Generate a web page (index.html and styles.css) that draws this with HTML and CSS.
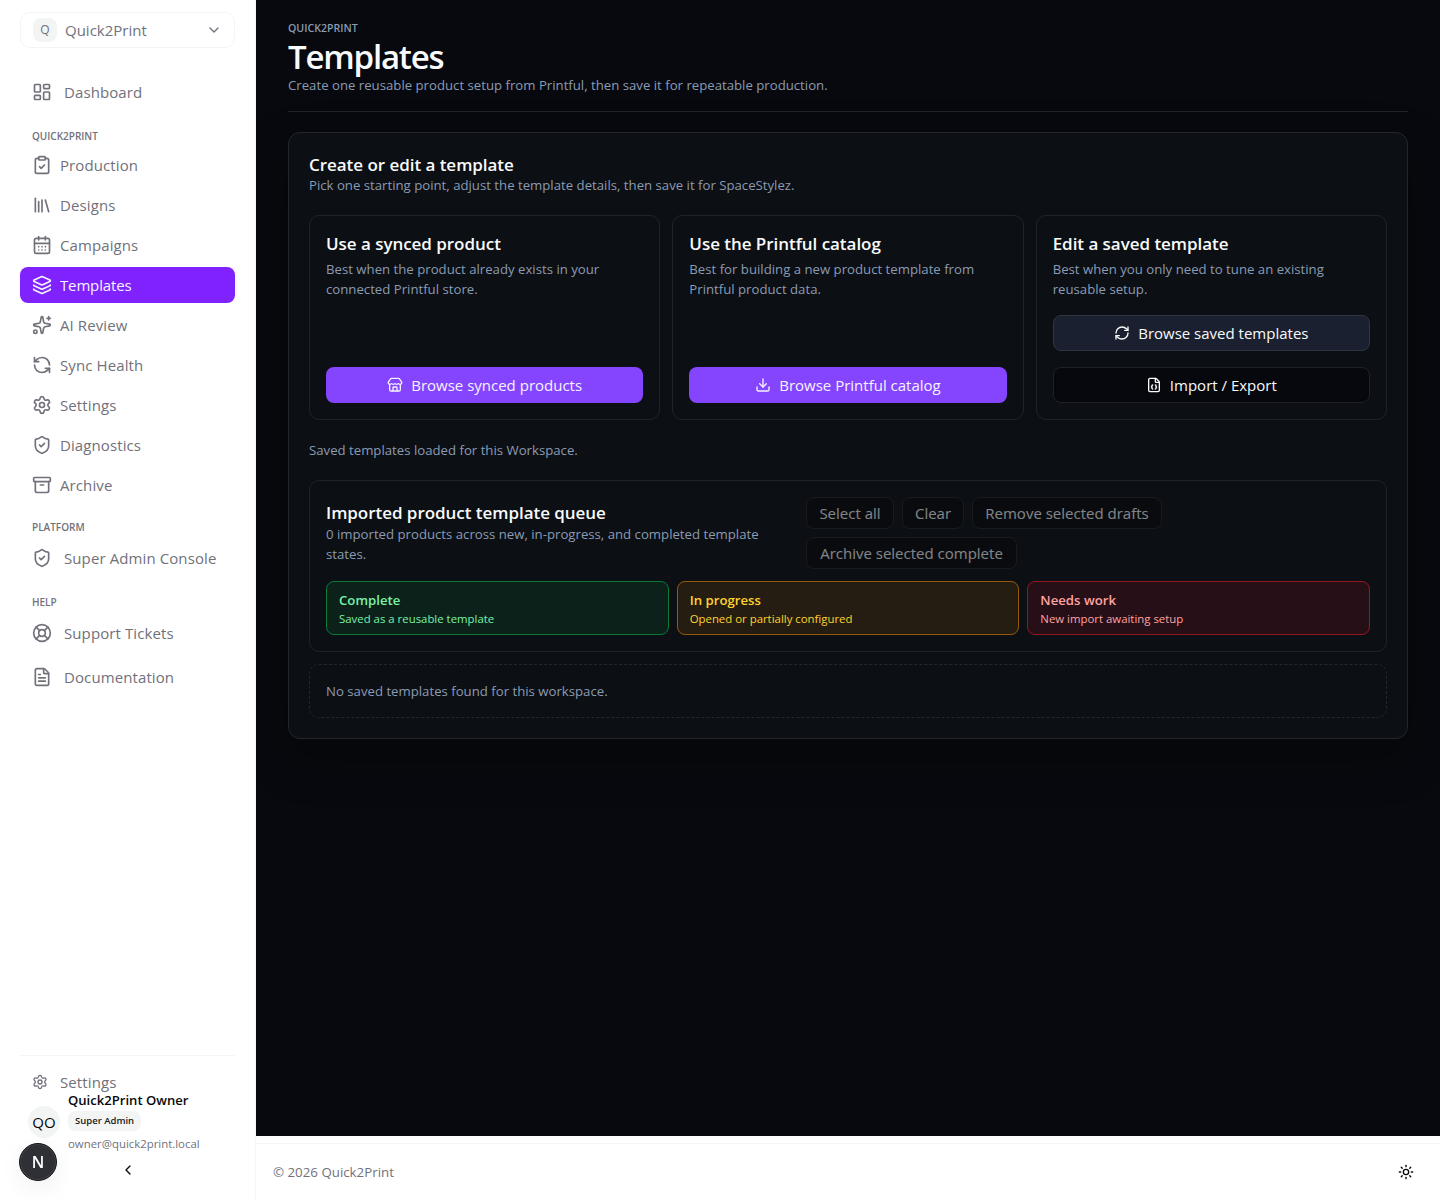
FILE: index.html
```html
<!DOCTYPE html>
<html lang="en">
<head>
    <meta charset="UTF-8">
    <meta name="viewport" content="width=device-width, initial-scale=1.0">
    <title>Templates - Quick2Print</title>
    <link rel="stylesheet" href="styles.css">
</head>
<body>
    <!-- Icon sprite -->
    <svg class="sprite" aria-hidden="true">
        <symbol id="i-dashboard" viewBox="0 0 24 24"><rect width="7" height="9" x="3" y="3" rx="1"/><rect width="7" height="5" x="14" y="3" rx="1"/><rect width="7" height="9" x="14" y="12" rx="1"/><rect width="7" height="5" x="3" y="16" rx="1"/></symbol>
        <symbol id="i-clipboard" viewBox="0 0 24 24"><rect width="8" height="4" x="8" y="2" rx="1"/><path d="M16 4h2a2 2 0 0 1 2 2v14a2 2 0 0 1-2 2H6a2 2 0 0 1-2-2V6a2 2 0 0 1 2-2h2"/><path d="m9 14 2 2 4-4"/></symbol>
        <symbol id="i-library" viewBox="0 0 24 24"><path d="m16 6 4 14"/><path d="M12 6v14"/><path d="M8 8v12"/><path d="M4 4v16"/></symbol>
        <symbol id="i-calendar" viewBox="0 0 24 24"><path d="M8 2v4"/><path d="M16 2v4"/><rect width="18" height="18" x="3" y="4" rx="2"/><path d="M3 10h18"/><path d="M8 14h.01"/><path d="M12 14h.01"/><path d="M16 14h.01"/><path d="M8 18h.01"/><path d="M12 18h.01"/><path d="M16 18h.01"/></symbol>
        <symbol id="i-layers" viewBox="0 0 24 24"><path d="M12.83 2.18a2 2 0 0 0-1.66 0L2.6 6.08a1 1 0 0 0 0 1.83l8.58 3.91a2 2 0 0 0 1.66 0l8.58-3.9a1 1 0 0 0 0-1.83z"/><path d="M2 12a1 1 0 0 0 .58.91l8.6 3.91a2 2 0 0 0 1.65 0l8.58-3.9A1 1 0 0 0 22 12"/><path d="M2 17a1 1 0 0 0 .58.91l8.6 3.91a2 2 0 0 0 1.65 0l8.58-3.9A1 1 0 0 0 22 17"/></symbol>
        <symbol id="i-sparkles" viewBox="0 0 24 24"><path d="M11.017 2.814a1 1 0 0 1 1.966 0l1.051 5.558a2 2 0 0 0 1.594 1.594l5.558 1.051a1 1 0 0 1 0 1.966l-5.558 1.051a2 2 0 0 0-1.594 1.594l-1.051 5.558a1 1 0 0 1-1.966 0l-1.051-5.558a2 2 0 0 0-1.594-1.594l-5.558-1.051a1 1 0 0 1 0-1.966l5.558-1.051a2 2 0 0 0 1.594-1.594z"/><path d="M20 2v4"/><path d="M22 4h-4"/><circle cx="4" cy="20" r="2"/></symbol>
        <symbol id="i-sync" viewBox="0 0 24 24"><path d="M21 12a9 9 0 0 0-9-9 9.75 9.75 0 0 0-6.74 2.74L3 8"/><path d="M3 3v5h5"/><path d="M3 12a9 9 0 0 0 9 9 9.75 9.75 0 0 0 6.74-2.74L21 16"/><path d="M16 16h5v5"/></symbol>
        <symbol id="i-refresh" viewBox="0 0 24 24"><path d="M3 12a9 9 0 0 1 9-9 9.75 9.75 0 0 1 6.74 2.74L21 8"/><path d="M21 3v5h-5"/><path d="M21 12a9 9 0 0 1-9 9 9.75 9.75 0 0 1-6.74-2.74L3 16"/><path d="M8 16H3v5"/></symbol>
        <symbol id="i-settings" viewBox="0 0 24 24"><path d="M9.671 4.136a2.34 2.34 0 0 1 4.659 0 2.34 2.34 0 0 0 3.319 1.915 2.34 2.34 0 0 1 2.33 4.033 2.34 2.34 0 0 0 0 3.831 2.34 2.34 0 0 1-2.33 4.033 2.34 2.34 0 0 0-3.319 1.915 2.34 2.34 0 0 1-4.659 0 2.34 2.34 0 0 0-3.32-1.915 2.34 2.34 0 0 1-2.33-4.033 2.34 2.34 0 0 0 0-3.831A2.34 2.34 0 0 1 6.35 6.051a2.34 2.34 0 0 0 3.319-1.915"/><circle cx="12" cy="12" r="3"/></symbol>
        <symbol id="i-shield" viewBox="0 0 24 24"><path d="M20 13c0 5-3.5 7.5-7.66 8.95a1 1 0 0 1-.67-.01C7.5 20.5 4 18 4 13V6a1 1 0 0 1 1-1c2 0 4.5-1.2 6.24-2.72a1.17 1.17 0 0 1 1.52 0C14.51 3.81 17 5 19 5a1 1 0 0 1 1 1z"/><path d="m9 12 2 2 4-4"/></symbol>
        <symbol id="i-archive" viewBox="0 0 24 24"><rect width="20" height="5" x="2" y="3" rx="1"/><path d="M4 8v11a2 2 0 0 0 2 2h12a2 2 0 0 0 2-2V8"/><path d="M10 12h4"/></symbol>
        <symbol id="i-buoy" viewBox="0 0 24 24"><circle cx="12" cy="12" r="10"/><path d="m4.93 4.93 4.24 4.24"/><path d="m14.83 9.17 4.24-4.24"/><path d="m14.83 14.83 4.24 4.24"/><path d="m9.17 14.83-4.24 4.24"/><circle cx="12" cy="12" r="4"/></symbol>
        <symbol id="i-file" viewBox="0 0 24 24"><path d="M6 22a2 2 0 0 1-2-2V4a2 2 0 0 1 2-2h8a2.4 2.4 0 0 1 1.704.706l3.588 3.588A2.4 2.4 0 0 1 20 8v12a2 2 0 0 1-2 2z"/><path d="M14 2v5a1 1 0 0 0 1 1h5"/><path d="M10 9H8"/><path d="M16 13H8"/><path d="M16 17H8"/></symbol>
        <symbol id="i-store" viewBox="0 0 24 24"><path d="M15 21v-5a1 1 0 0 0-1-1h-4a1 1 0 0 0-1 1v5"/><path d="M17.774 10.31a1.12 1.12 0 0 0-1.549 0 2.5 2.5 0 0 1-3.451 0 1.12 1.12 0 0 0-1.548 0 2.5 2.5 0 0 1-3.452 0 1.12 1.12 0 0 0-1.549 0 2.5 2.5 0 0 1-3.77-3.248l2.889-4.184A2 2 0 0 1 7 2h10a2 2 0 0 1 1.653.873l2.895 4.192a2.5 2.5 0 0 1-3.774 3.244"/><path d="M4 10.95V19a2 2 0 0 0 2 2h12a2 2 0 0 0 2-2v-8.05"/></symbol>
        <symbol id="i-download" viewBox="0 0 24 24"><path d="M12 15V3"/><path d="M21 15v4a2 2 0 0 1-2 2H5a2 2 0 0 1-2-2v-4"/><path d="m7 10 5 5 5-5"/></symbol>
        <symbol id="i-json" viewBox="0 0 24 24"><path d="M6 22a2 2 0 0 1-2-2V4a2 2 0 0 1 2-2h8a2.4 2.4 0 0 1 1.704.706l3.588 3.588A2.4 2.4 0 0 1 20 8v12a2 2 0 0 1-2 2z"/><path d="M14 2v5a1 1 0 0 0 1 1h5"/><path d="M10 12a1 1 0 0 0-1 1v1a1 1 0 0 1-1 1 1 1 0 0 1 1 1v1a1 1 0 0 0 1 1"/><path d="M14 18a1 1 0 0 0 1-1v-1a1 1 0 0 1 1-1 1 1 0 0 1-1-1v-1a1 1 0 0 0-1-1"/></symbol>
        <symbol id="i-down" viewBox="0 0 24 24"><path d="m6 9 6 6 6-6"/></symbol>
        <symbol id="i-left" viewBox="0 0 24 24"><path d="m15 18-6-6 6-6"/></symbol>
        <symbol id="i-sun" viewBox="0 0 24 24"><circle cx="12" cy="12" r="4"/><path d="M12 2v2"/><path d="M12 20v2"/><path d="m4.93 4.93 1.41 1.41"/><path d="m17.66 17.66 1.41 1.41"/><path d="M2 12h2"/><path d="M20 12h2"/><path d="m6.34 17.66-1.41 1.41"/><path d="m19.07 4.93-1.41 1.41"/></symbol>
    </svg>

    <div class="app">
        <aside class="sidebar">
            <button class="workspace">
                <span class="workspace-mark">Q</span>
                <span class="workspace-name">Quick2Print</span>
                <svg class="icon icon-sm"><use href="#i-down"/></svg>
            </button>

            <nav class="nav">
                <a href="#" class="nav-item nav-wide"><svg class="icon"><use href="#i-dashboard"/></svg><span>Dashboard</span></a>

                <div class="nav-label label-main">Quick2Print</div>
                <div class="nav-list">
                    <a href="#" class="nav-item"><svg class="icon"><use href="#i-clipboard"/></svg><span>Production</span></a>
                    <a href="#" class="nav-item"><svg class="icon"><use href="#i-library"/></svg><span>Designs</span></a>
                    <a href="#" class="nav-item"><svg class="icon"><use href="#i-calendar"/></svg><span>Campaigns</span></a>
                    <a href="#" class="nav-item active"><svg class="icon"><use href="#i-layers"/></svg><span>Templates</span></a>
                    <a href="#" class="nav-item"><svg class="icon"><use href="#i-sparkles"/></svg><span>AI Review</span></a>
                    <a href="#" class="nav-item"><svg class="icon"><use href="#i-sync"/></svg><span>Sync Health</span></a>
                    <a href="#" class="nav-item"><svg class="icon"><use href="#i-settings"/></svg><span>Settings</span></a>
                    <a href="#" class="nav-item"><svg class="icon"><use href="#i-shield"/></svg><span>Diagnostics</span></a>
                    <a href="#" class="nav-item"><svg class="icon"><use href="#i-archive"/></svg><span>Archive</span></a>
                </div>

                <div class="nav-label label-platform">Platform</div>
                <a href="#" class="nav-item nav-wide"><svg class="icon"><use href="#i-shield"/></svg><span>Super Admin Console</span></a>

                <div class="nav-label label-help">Help</div>
                <div class="nav-list help-list">
                    <a href="#" class="nav-item nav-wide"><svg class="icon"><use href="#i-buoy"/></svg><span>Support Tickets</span></a>
                    <a href="#" class="nav-item nav-wide"><svg class="icon"><use href="#i-file"/></svg><span>Documentation</span></a>
                </div>
            </nav>

            <div class="account">
                <a href="#" class="account-settings"><svg class="icon icon-sm"><use href="#i-settings"/></svg><span>Settings</span></a>
                <div class="user">
                    <div class="avatar">QO</div>
                    <div class="user-info">
                        <div class="user-name">Quick2Print Owner</div>
                        <div class="user-role">Super Admin</div>
                        <div class="user-email">owner@quick2print.local</div>
                    </div>
                </div>
                <button class="collapse"><svg class="icon icon-sm"><use href="#i-left"/></svg></button>
            </div>
        </aside>

        <div class="content">
            <main class="page">
                <header class="page-header">
                    <div class="eyebrow">Quick2Print</div>
                    <h1>Templates</h1>
                    <p>Create one reusable product setup from Printful, then save it for repeatable production.</p>
                </header>

                <section class="panel">
                    <h2>Create or edit a template</h2>
                    <p>Pick one starting point, adjust the template details, then save it for SpaceStylez.</p>

                    <div class="cards">
                        <div class="card">
                            <h3>Use a synced product</h3>
                            <p>Best when the product already exists in your connected Printful store.</p>
                            <div class="card-actions">
                                <button class="btn btn-primary"><svg class="icon icon-sm"><use href="#i-store"/></svg><span>Browse synced products</span></button>
                            </div>
                        </div>
                        <div class="card">
                            <h3>Use the Printful catalog</h3>
                            <p>Best for building a new product template from Printful product data.</p>
                            <div class="card-actions">
                                <button class="btn btn-primary"><svg class="icon icon-sm"><use href="#i-download"/></svg><span>Browse Printful catalog</span></button>
                            </div>
                        </div>
                        <div class="card">
                            <h3>Edit a saved template</h3>
                            <p>Best when you only need to tune an existing reusable setup.</p>
                            <div class="card-actions">
                                <button class="btn btn-secondary"><svg class="icon icon-sm"><use href="#i-refresh"/></svg><span>Browse saved templates</span></button>
                                <button class="btn btn-outline"><svg class="icon icon-sm"><use href="#i-json"/></svg><span>Import / Export</span></button>
                            </div>
                        </div>
                    </div>

                    <p class="load-status">Saved templates loaded for this Workspace.</p>

                    <div class="queue">
                        <div class="queue-header">
                            <div class="queue-text">
                                <h3>Imported product template queue</h3>
                                <p>0 imported products across new, in-progress, and completed template states.</p>
                            </div>
                            <div class="queue-actions">
                                <button class="btn-small w-select" disabled>Select all</button>
                                <button class="btn-small w-clear" disabled>Clear</button>
                                <button class="btn-small w-remove" disabled>Remove selected drafts</button>
                                <button class="btn-small w-archive" disabled>Archive selected complete</button>
                            </div>
                        </div>
                        <div class="states">
                            <div class="state complete"><strong>Complete</strong><span>Saved as a reusable template</span></div>
                            <div class="state progress"><strong>In progress</strong><span>Opened or partially configured</span></div>
                            <div class="state needs"><strong>Needs work</strong><span>New import awaiting setup</span></div>
                        </div>
                    </div>

                    <div class="empty">No saved templates found for this workspace.</div>
                </section>
            </main>

            <footer class="footer">
                <span>© 2026 Quick2Print</span>
                <button class="theme-btn"><svg class="icon icon-sm"><use href="#i-sun"/></svg></button>
            </footer>
        </div>
    </div>

    <div class="dev-badge">N</div>
</body>
</html>
```
FILE: styles.css
```css
* {
    margin: 0;
    padding: 0;
    box-sizing: border-box;
}

body {
    font-family: 'Segoe UI', 'Open Sans', 'Noto Sans', sans-serif;
    font-size: 15px;
    line-height: 24px;
    background: #fff;
    color: #09090b;
}

button {
    font: inherit;
    color: inherit;
    background: none;
    border: none;
    white-space: nowrap;
}

a {
    color: inherit;
    text-decoration: none;
}

.sprite {
    display: none;
}

.icon {
    width: 20px;
    height: 20px;
    flex-shrink: 0;
    fill: none;
    stroke: currentColor;
    stroke-width: 2;
    stroke-linecap: round;
    stroke-linejoin: round;
}

.icon-sm {
    width: 16px;
    height: 16px;
}

.app {
    display: flex;
    height: 1200px;
    overflow: hidden;
}

/* Sidebar */
.sidebar {
    width: 256px;
    flex-shrink: 0;
    padding: 12px 20px 0;
    border-right: 1px solid #f4f5f5;
    display: flex;
    flex-direction: column;
    color: #71717b;
}

.workspace {
    height: 36px;
    padding: 0 12px;
    border: 1px solid #f3f4f4;
    border-radius: 10px;
    display: flex;
    align-items: center;
    gap: 8px;
}

.workspace-mark {
    width: 24px;
    height: 24px;
    border-radius: 8px;
    background: #f3f5f5;
    font-size: 12px;
}

.workspace-name {
    flex: 1;
    text-align: left;
}

.nav {
    padding-top: 26px;
}

.nav-item {
    height: 36px;
    padding: 0 12px;
    border-radius: 8px;
    display: flex;
    align-items: center;
    gap: 8px;
    white-space: nowrap;
    letter-spacing: 0.1px;
}

.nav-wide {
    gap: 12px;
}

.nav-item.active {
    background: #7f22fe;
    color: #f5f3ff;
    letter-spacing: -0.15px;
}

.nav-list {
    display: flex;
    flex-direction: column;
    gap: 4px;
}

.help-list {
    gap: 8px;
}

.nav-label {
    padding-left: 12px;
    font-size: 10px;
    font-weight: 600;
    line-height: 14px;
    text-transform: uppercase;
}

.label-main {
    margin: 19px 0 4px;
}

.label-platform {
    margin: 17px 0 6px;
}

.label-help {
    margin: 19px 0 6px;
}

.account {
    height: 145px;
    margin-top: auto;
    padding-top: 14px;
    border-top: 1px solid #f4f5f5;
    display: flex;
    flex-direction: column;
}

.account-settings {
    height: 24px;
    padding-left: 12px;
    display: flex;
    align-items: center;
    gap: 12px;
    letter-spacing: 0.1px;
}

.user {
    margin-top: -4px;
    padding-left: 8px;
    display: flex;
    align-items: center;
    gap: 8px;
}

.avatar {
    width: 32px;
    height: 32px;
    border-radius: 50%;
    background: #f3f5f5;
    color: #09090b;
    line-height: 32px;
    text-align: center;
}

.user-info {
    display: flex;
    flex-direction: column;
    align-items: flex-start;
}

.user-name {
    font-size: 13.1px;
    font-weight: 600;
    line-height: 20px;
    color: #09090b;
}

.user-role {
    height: 20px;
    margin: 1px 0 3px;
    padding: 0 7px;
    border-radius: 8px;
    background: #f3f5f5;
    color: #18181b;
    font-size: 9.5px;
    font-weight: 600;
    line-height: 20px;
}

.user-email {
    font-size: 11.4px;
    line-height: 20px;
}

.collapse {
    height: 16px;
    margin-top: 8px;
    display: flex;
    justify-content: center;
    color: #09090b;
}

.dev-badge {
    position: fixed;
    left: 19px;
    bottom: 19px;
    width: 38px;
    height: 38px;
    border: 1px solid #141416;
    border-radius: 50%;
    background: #2e3036;
    box-shadow: inset 0 0 0 1px #414347, 0 8px 24px rgba(0, 0, 0, 0.06);
    color: #fff;
    font-size: 16px;
    font-weight: 600;
    line-height: 36px;
    text-align: center;
}

/* Page */
.content {
    flex: 1;
    display: flex;
    flex-direction: column;
}

.page {
    height: 1136px;
    padding: 20px 32px;
    overflow: hidden;
    background: #07090e;
    color: #f8fafc;
}

.page p,
.empty {
    font-size: 13.2px;
    line-height: 20px;
    color: #8b9bb3;
}

.page-header {
    height: 92px;
    margin-bottom: 20px;
    border-bottom: 1px solid #202226;
}

.eyebrow {
    font-size: 10.6px;
    font-weight: 600;
    line-height: 16px;
    text-transform: uppercase;
    color: #8b9bb3;
}

h1 {
    padding-top: 3px;
    font-size: 33px;
    font-weight: 600;
    line-height: 36px;
    letter-spacing: -1.2px;
}

h2,
h3 {
    font-size: 17px;
    font-weight: 600;
    line-height: 22px;
    letter-spacing: -0.04px;
}

h2,
.card h3 {
    padding-top: 1px;
    line-height: 21px;
}

.panel {
    padding: 20px;
    border: 1px solid #24262a;
    border-radius: 12px;
    background: #0c0f13;
    box-shadow: 0 18px 48px rgba(0, 0, 0, 0.28);
}

.cards {
    margin-top: 20px;
    display: grid;
    grid-template-columns: repeat(3, 1fr);
    gap: 12px;
}

.card {
    height: 205px;
    padding: 16px;
    border: 1px solid #202327;
    border-radius: 10px;
    display: flex;
    flex-direction: column;
}

.card p {
    margin-top: 5px;
}

.card-actions {
    margin-top: auto;
    display: flex;
    flex-direction: column;
    gap: 16px;
}

.btn {
    height: 36px;
    border: 1px solid transparent;
    border-radius: 8px;
    display: flex;
    align-items: center;
    justify-content: center;
    gap: 8px;
}

.btn-primary {
    background: #8545ff;
    color: #f5f3ff;
}

.btn-secondary {
    background: #1b2030;
    border-color: #31353f;
}

.btn-outline {
    background: #07080d;
    border-color: #1f2126;
}

.load-status {
    margin: 20px 0;
}

.queue {
    padding: 16px;
    border: 1px solid #202327;
    border-radius: 10px;
}

.queue-header {
    display: grid;
    grid-template-columns: 468px 1fr;
    gap: 12px;
    align-items: center;
}

.queue-actions {
    display: flex;
    flex-wrap: wrap;
    gap: 8px;
}

.btn-small {
    height: 32px;
    border: 1px solid #25272b;
    border-radius: 8px;
    background: #07080d;
    color: #f8fafc;
    opacity: 0.5;
}

.w-select {
    width: 88px;
}

.w-clear {
    width: 62px;
}

.w-remove {
    width: 190px;
}

.w-archive {
    width: 211px;
}

.states {
    margin-top: 12px;
    display: grid;
    grid-template-columns: repeat(3, 1fr);
    gap: 8px;
}

.state {
    padding: 8px 12px;
    border: 1px solid;
    border-radius: 8px;
    display: flex;
    flex-direction: column;
    font-size: 11.4px;
    line-height: 16px;
}

.state strong {
    font-size: 13.2px;
    font-weight: 600;
    line-height: 20px;
}

.state span {
    padding-top: 1px;
    line-height: 15px;
}

.complete {
    background: #0b2119;
    border-color: #0b7a35;
    color: #7bf1a8;
}

.progress {
    background: #261d12;
    border-color: #975a0a;
    color: #ffd230;
}

.needs {
    background: #260f16;
    border-color: #97161d;
    color: #ffa2a2;
}

.empty {
    margin-top: 12px;
    padding: 16px;
    border: 1px dashed #24272b;
    border-radius: 10px;
}

/* Footer */
.footer {
    height: 57px;
    margin-top: 7px;
    padding: 0 26px 0 17px;
    border-top: 1px solid #f4f5f5;
    display: flex;
    align-items: center;
    justify-content: space-between;
    font-size: 13.3px;
    color: #71717b;
}

.theme-btn {
    display: flex;
    color: #09090b;
}
```
